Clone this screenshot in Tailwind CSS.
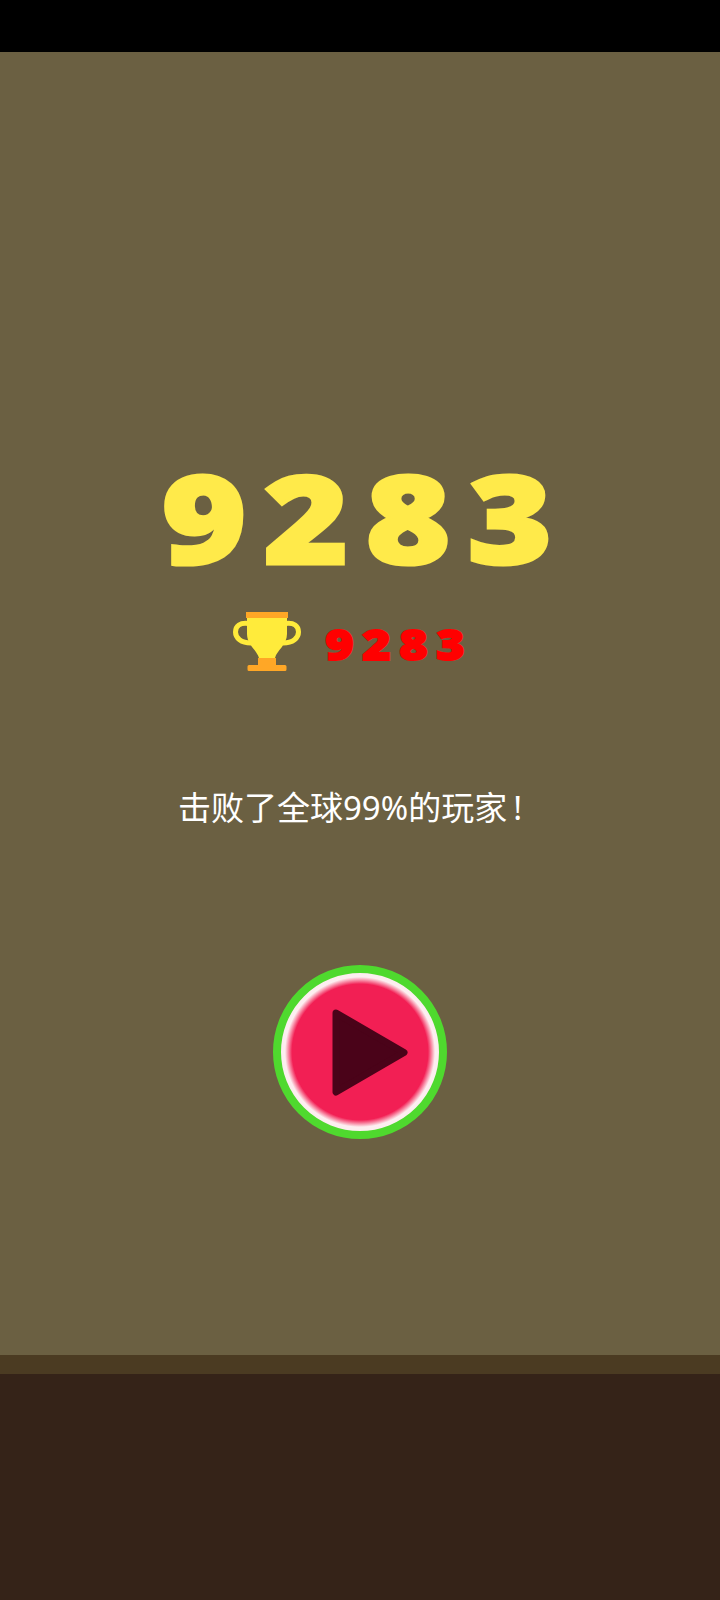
<!doctype html>
<html lang="zh">
<head>
<meta charset="utf-8">
<script src="https://cdn.jsdelivr.net/npm/@tailwindcss/browser@4"></script>
</head>
<body class="m-0 bg-black">
<div class="w-[720px] h-[1600px] flex flex-col overflow-hidden font-['Noto_Sans','Noto_Sans_CJK_SC',sans-serif]">
  <div class="h-[52px] bg-black shrink-0"></div>
  <main class="h-[1303px] bg-[#6b6042] shrink-0 flex flex-col items-center pt-[405px]">
    <div class="grid grid-cols-[102px_102px_102px_102px] ml-[-6px] h-[120px] items-center justify-items-center text-[#ffea4a] text-[123px] leading-[120px] font-extrabold font-['Open_Sans','Noto_Sans',sans-serif] [-webkit-text-stroke:3px_#ffea4a]">
      <span class="scale-x-[1.18]">9</span><span class="scale-x-[1.18]">2</span><span class="scale-x-[1.18]">8</span><span class="scale-x-[1.18]">3</span>
    </div>
    <div class="flex items-center mt-[35px] h-[60px] ml-[-18px]">
      <svg class="w-[68px] h-[60px] shrink-0" viewBox="234 612 68 60" aria-hidden="true">
        <path d="M250 623.500C241 622 236.500 626 236.500 632C236.500 638 242 643 252 643M286 623.500C295 622 299.500 626 299.500 632C299.500 638 294 643 284 643" fill="none" stroke="#ffeb3b" stroke-width="5"/>
        <path d="M248 618H288V634C288 645 278 650 276 658H260C258 650 248 645 248 634Z" fill="#ffeb3b"/>
        <rect x="247" y="612" width="42" height="6" fill="#ffa726"/>
        <path d="M259 658h18v7h9a1.500 1.500 0 0 1 1.500 1.500v3a1.500 1.500 0 0 1-1.500 1.500h-36a1.500 1.500 0 0 1-1.500-1.500v-3a1.500 1.500 0 0 1 1.500-1.500h9z" fill="#ffa726"/>
      </svg>
      <div class="ml-[20px] mt-[4px] grid grid-cols-[37px_37px_37px_37px] justify-items-center text-[#ff0000] text-[42px] leading-[60px] font-extrabold font-['Open_Sans','Noto_Sans',sans-serif] [-webkit-text-stroke:2px_#ff0000]">
        <span class="scale-x-[1.15]">9</span><span class="scale-x-[1.15]">2</span><span class="scale-x-[1.15]">8</span><span class="scale-x-[1.15]">3</span>
      </div>
    </div>
    <p class="mt-[113px] w-[420px] pr-[20px] text-center text-white text-[33px] leading-[46px]">击败了全球99%的玩家<span class="ml-[6px]">!</span></p>
    <div class="mt-[134px] w-[174px] h-[174px] rounded-full border-[8px] border-[#4fd92e] bg-[radial-gradient(circle_closest-side,#f21f54_0%,#f21f54_86%,#fdeef0_95%,#fdeef0_100%)] flex items-center justify-center">
      <svg class="w-[76px] h-[87px] ml-[19px]" viewBox="0 0 76 87" aria-hidden="true">
        <path d="M4 4 L72 43.500 L4 83 Z" fill="#4a0319" stroke="#4a0319" stroke-width="7" stroke-linejoin="round"/>
      </svg>
    </div>
  </main>
  <div class="h-[19px] bg-[#4b3b22] shrink-0"></div>
  <div class="flex-1 bg-[#352318]"></div>
</div>
</body>
</html>
